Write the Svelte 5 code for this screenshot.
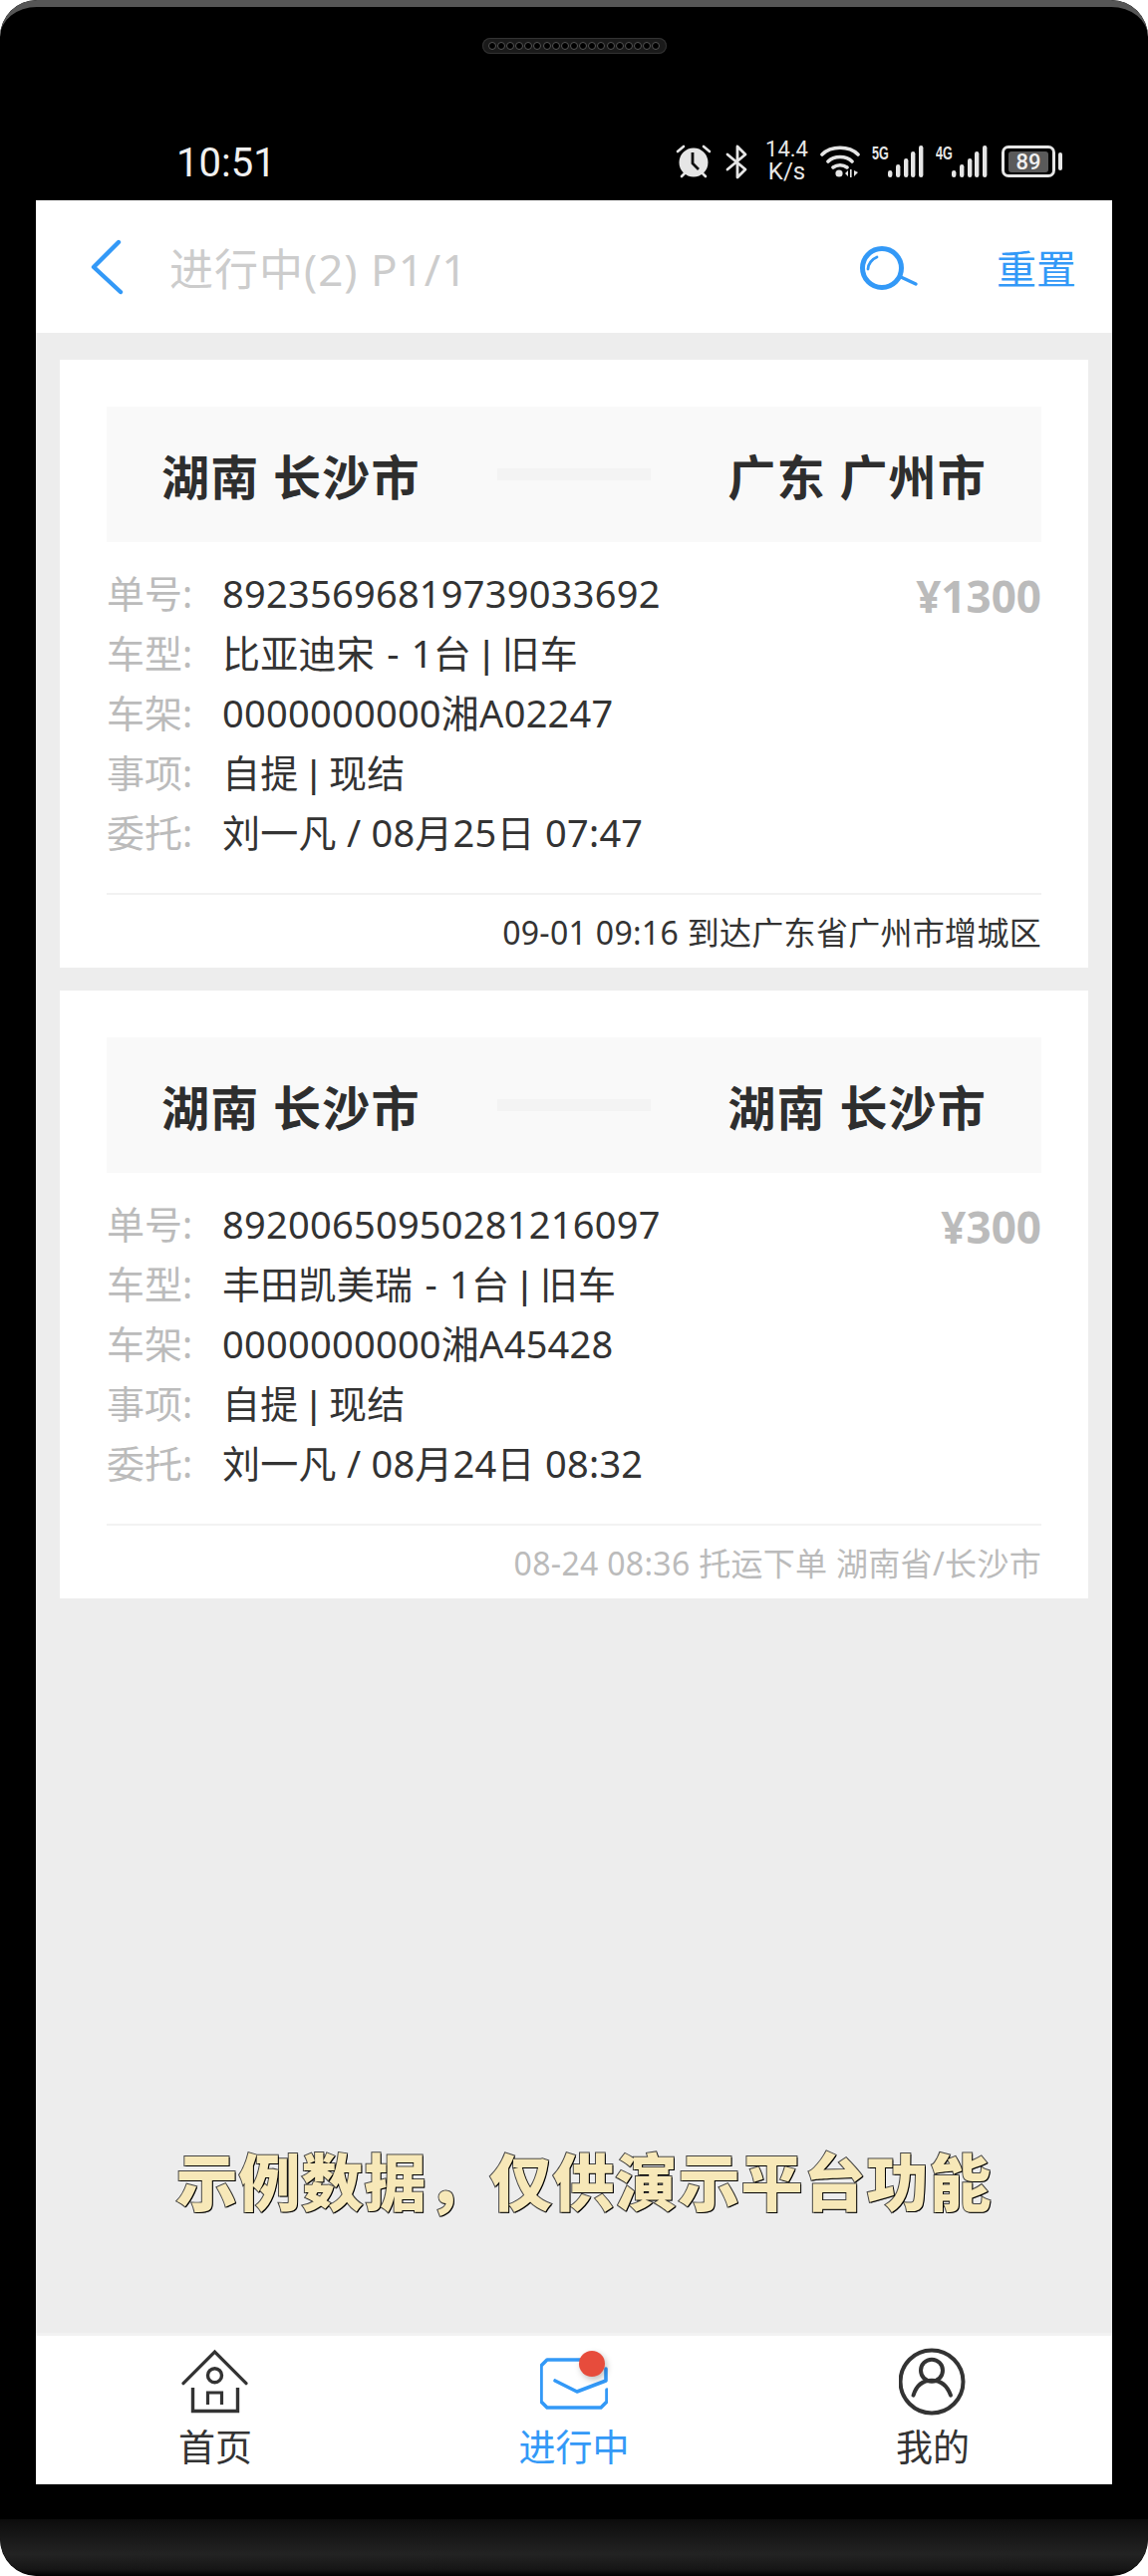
<script>
	const orders = [
		{
			from: '湖南 长沙市',
			to: '广东 广州市',
			no: '89235696819739033692',
			price: '¥1300',
			car: '比亚迪宋',
			qty: '1台',
			age: '旧车',
			vin: '0000000000湘A02247',
			client: '刘一凡 / 08月25日 07:47',
			track: '09-01 09:16 到达广东省广州市增城区',
			fresh: true
		},
		{
			from: '湖南 长沙市',
			to: '湖南 长沙市',
			no: '89200650950281216097',
			price: '¥300',
			car: '丰田凯美瑞',
			qty: '1台',
			age: '旧车',
			vin: '0000000000湘A45428',
			client: '刘一凡 / 08月24日 08:32',
			track: '08-24 08:36 托运下单 湖南省/长沙市',
			fresh: false
		}
	];
</script>

<div class="phone">
	<div class="bezel">
		<div class="speaker">
			{#each Array(19) as _}
				<i></i>
			{/each}
		</div>
		<div class="status">
			<span class="time">10:51</span>
			<div class="status-icons">
				<svg class="alarm" width="36" height="36" viewBox="0 0 36 36">
					<circle cx="18" cy="19" r="14.5" fill="#e6e6e6" />
					<path d="M17 9v11l6 6" fill="none" stroke="#111" stroke-width="2.8" />
					<path d="M2 8l6-5M34 8l-6-5M6 33l3-3M30 33l-3-3" stroke="#e6e6e6" stroke-width="2.6" stroke-linecap="round" />
				</svg>
				<svg class="bt" width="22" height="35" viewBox="0 0 22 35">
					<path d="M2 10l18 15-8 8V2l8 8L2 25" fill="none" stroke="#e6e6e6" stroke-width="2.8" stroke-linejoin="round" stroke-linecap="round" />
				</svg>
				<div class="speed"><span>14.4</span><span class="unit">K/s</span></div>
				<svg class="wifi" width="40" height="34" viewBox="0 0 40 34">
					<path d="M2 10C11 1 29 1 38 10M8 17c6-6 18-6 24 0M13 23c4-3 10-3 14 0" fill="none" stroke="#e6e6e6" stroke-width="3.6" stroke-linecap="round" />
					<circle cx="19" cy="29" r="3.6" fill="#e6e6e6" />
					<path d="M25 29l3-3v6zM34 26v6l4-4z" fill="#e6e6e6" />
					<rect x="30" y="25" width="1.6" height="8" fill="#e6e6e6" />
				</svg>
				{#each ['5G', '4G'] as net}
					<div class="net">
						<span>{net}</span>
						<svg width="36" height="32" viewBox="0 0 36 32">
							<rect x="0" y="25" width="4.4" height="7" rx="2.2" />
							<rect x="8" y="19" width="4.4" height="13" rx="2.2" />
							<rect x="16" y="13" width="4.4" height="19" rx="2.2" />
							<rect x="23" y="6" width="4.4" height="26" rx="2.2" />
							<rect x="31" y="0" width="4.4" height="32" rx="2.2" />
						</svg>
					</div>
				{/each}
				<div class="battery">
					<div class="cell"><span>89</span></div>
					<div class="nub"></div>
				</div>
			</div>
		</div>
	</div>

	<div class="screen">
		<header class="topbar">
			<svg class="back" width="36" height="60" viewBox="0 0 36 60">
				<path d="M28 5L3 30l27 25" fill="none" stroke="#3399f7" stroke-width="4.4" stroke-linecap="round" stroke-linejoin="round" />
			</svg>
			<span class="title">进行中(2) P1/1</span>
			<svg class="search" width="64" height="48" viewBox="0 0 64 48">
				<circle cx="23" cy="24" r="19.5" fill="none" stroke="#3399f7" stroke-width="5" />
				<path d="M42 33l15 7" stroke="#3399f7" stroke-width="3.4" stroke-linecap="round" />
				<path d="M9 25c0-5 4-10 9-12" fill="none" stroke="#3399f7" stroke-width="2.8" stroke-linecap="round" />
			</svg>
			<span class="reset">重置</span>
		</header>

		<main class="list">
			{#each orders as o}
				<article class="card">
					<div class="route">
						<b>{o.from}</b>
						<span class="dash"></span>
						<b>{o.to}</b>
					</div>
					<div class="rows">
						<div class="row">
							<span class="k">单号:</span><span class="v no">{o.no}</span>
							<span class="price">{o.price}</span>
						</div>
						<div class="row">
							<span class="k">车型:</span>
							<span class="v">{o.car} <i class="minus">-</i> {o.qty} <i class="pipe">|</i> {o.age}</span>
						</div>
						<div class="row"><span class="k">车架:</span><span class="v">{o.vin}</span></div>
						<div class="row">
							<span class="k">事项:</span>
							<span class="v">自提 <i class="pipe">|</i> 现结</span>
						</div>
						<div class="row"><span class="k">委托:</span><span class="v">{o.client}</span></div>
					</div>
					<div class="track" class:fresh={o.fresh}>{o.track}</div>
				</article>
			{/each}
			<div class="caption">示例数据，仅供演示平台功能</div>
		</main>

		<nav class="tabs">
			<div class="tab">
				<svg width="68" height="72" viewBox="0 0 68 72">
					<path d="M2 38.7L33.500 7 65 38.700" fill="none" stroke="#333" stroke-width="3.2" stroke-linecap="round" />
					<circle cx="33.500" cy="30.700" r="7" fill="none" stroke="#333" stroke-width="3.400" />
					<path d="M11.500 43v23.500h45V43" fill="none" stroke="#333" stroke-width="3.400" />
					<path d="M26.500 60V48h14v12" fill="none" stroke="#333" stroke-width="3.200" />
				</svg>
				<span>首页</span>
			</div>
			<div class="tab active">
				<svg width="68" height="72" viewBox="0 0 68 72">
					<path d="M52 15H7l-6 6v36l6 6h54l6-6V45" fill="none" stroke="#3399f7" stroke-width="3.600" stroke-linecap="round" stroke-linejoin="round" />
					<path d="M15 36l22 11 29-11v-12" fill="none" stroke="#3399f7" stroke-width="3.600" stroke-linecap="round" stroke-linejoin="round" />
				</svg>
				<i class="badge"></i>
				<span>进行中</span>
			</div>
			<div class="tab">
				<svg width="68" height="72" viewBox="0 0 68 72">
					<circle cx="33" cy="37" r="31.500" fill="none" stroke="#333" stroke-width="4" />
					<circle cx="33" cy="25.700" r="11" fill="none" stroke="#333" stroke-width="4" />
					<path d="M14.500 50.700c3-10 10-15 18.500-15s15.500 5 19 15" fill="none" stroke="#333" stroke-width="4" stroke-linecap="round" />
				</svg>
				<span>我的</span>
			</div>
		</nav>
	</div>

	<div class="chin"></div>
</div>

<style>
	:global(body) {
		background: #fff;
	}

	.phone {
		display: flex;
		flex-direction: column;
		width: 1152px;
		height: 2585px;
		background: #000;
		border-radius: 37px;
		overflow: hidden;
		font-family: 'Noto Sans', 'Noto Sans CJK SC', sans-serif;
	}

	.bezel {
		flex: none;
		display: flex;
		flex-direction: column;
		height: 201px;
		border-top: 7px solid #565656;
		border-radius: 37px 37px 0 0;
		box-sizing: border-box;
	}

	.speaker {
		display: flex;
		align-items: center;
		justify-content: center;
		gap: 1.170px;
		width: 185px;
		height: 16px;
		margin: 31px auto 0;
		border-radius: 8px;
		background: #1a1a1a;
		box-shadow: inset 0 0 0 1px #333;
	}

	.speaker i {
		width: 8px;
		height: 8px;
		box-sizing: border-box;
		border: 1px solid #555;
		border-radius: 50%;
		background: #000;
	}

	.status {
		display: flex;
		align-items: center;
		justify-content: space-between;
		margin-top: 84px;
		padding: 0 86px 0 177px;
		color: #e6e6e6;
	}

	.time {
		margin-top: 4px;
		font: 400 40px/44px Roboto, sans-serif;
		color: #f0f0f0;
	}

	.status-icons {
		display: flex;
		align-items: center;
		gap: 12px;
	}

	.alarm {
		margin-right: 2px;
	}

	.bt {
		margin-right: 6px;
	}

	.speed {
		display: flex;
		flex-direction: column;
		align-items: center;
		font: 400 22px/20px Roboto, sans-serif;
	}

	.speed .unit {
		font-size: 24px;
		line-height: 24px;
	}

	.net {
		display: flex;
		align-items: flex-start;
		width: 52px;
	}

	.net span {
		width: 16px;
		font: 700 18px/16px 'Liberation Sans', sans-serif;
		transform: scaleX(0.7);
		transform-origin: left;
		white-space: nowrap;
	}

	.net svg {
		fill: #e6e6e6;
	}

	.battery {
		display: flex;
		align-items: center;
		gap: 3px;
		margin-left: 2px;
	}

	.cell {
		display: flex;
		align-items: center;
		justify-content: center;
		width: 54px;
		height: 32px;
		box-sizing: border-box;
		border: 3px solid #e6e6e6;
		border-radius: 7px;
	}

	.cell span {
		display: block;
		width: 40px;
		border-radius: 3px;
		background: #5a5a5a;
		text-align: center;
		font: 500 22px/21px Roboto, sans-serif;
		color: #f0f0f0;
	}

	.nub {
		width: 4px;
		height: 18px;
		border-radius: 2px;
		background: #e6e6e6;
	}

	.screen {
		flex: none;
		display: flex;
		flex-direction: column;
		height: 2292px;
		margin: 0 36px;
		background: #ededed;
	}

	.topbar {
		flex: none;
		display: flex;
		align-items: center;
		height: 133px;
		padding: 0 36px 0 55px;
		background: #fff;
	}

	.title {
		flex: 1;
		margin-left: 43px;
		font-size: 44px;
		letter-spacing: 1px;
		color: #ccc;
	}

	.search {
		margin: 2px 74px 0 0;
	}

	.reset {
		font-size: 40px;
		color: #3399f7;
	}

	.list {
		flex: 1;
		position: relative;
		display: flex;
		flex-direction: column;
		gap: 23px;
		padding: 27px 24px;
	}

	.card {
		padding: 47px 47px 15px;
		background: #fff;
	}

	.route {
		display: flex;
		align-items: center;
		justify-content: space-between;
		height: 136px;
		padding: 0 55px;
		background: #f9f9f9;
		font-size: 48px;
		letter-spacing: 1.200px;
		color: #2e2e2e;
	}

	.route b {
		font-weight: 700;
	}

	.dash {
		width: 154px;
		height: 12px;
		background: #f3f3f3;
	}

	.rows {
		margin-top: 19px;
		padding-bottom: 33px;
		border-bottom: 2px solid #f2f2f2;
	}

	.row {
		display: flex;
		align-items: center;
		height: 60px;
		font-size: 38px;
		color: #333;
	}

	.k {
		width: 116px;
		color: #bbb;
	}

	.v {
		flex: 1;
		letter-spacing: 0.250px;
	}

	.v.no {
		padding-top: 4px;
	}

	.pipe {
		font-family: 'Liberation Sans', sans-serif;
		font-style: normal;
	}

	.minus {
		padding: 0 2px;
		font-style: normal;
	}

	.price {
		margin-top: 10px;
		font-size: 44px;
		font-weight: 700;
		color: #bbb;
	}

	.track {
		padding-top: 18px;
		text-align: right;
		font-size: 32px;
		line-height: 40px;
		letter-spacing: 0.300px;
		color: #bbb;
	}

	.track.fresh {
		color: #333;
	}

	.caption {
		position: absolute;
		left: 20px;
		right: 0;
		top: 1823px;
		text-align: center;
		font-size: 62px;
		line-height: 66px;
		font-weight: 900;
		letter-spacing: 1px;
		color: #f7e8b8;
		-webkit-text-stroke: 2px #444;
		paint-order: stroke fill;
		text-shadow: 1px 1px 0 #000;
	}

	.tabs {
		flex: none;
		display: grid;
		grid-template-columns: repeat(3, 1fr);
		height: 152px;
		border-top: 3px solid #f2f2f2;
		box-sizing: border-box;
		background: #fff;
	}

	.tab {
		position: relative;
		display: flex;
		flex-direction: column;
		align-items: center;
		padding-top: 9px;
		font-size: 37px;
		line-height: 44px;
		color: #333;
	}

	.tab span {
		margin-top: 9px;
	}

	.tab.active {
		color: #3399f7;
	}

	.badge {
		position: absolute;
		left: 185px;
		top: 15px;
		width: 26px;
		height: 26px;
		border-radius: 50%;
		background: #e74c3c;
		box-shadow: 2px 3px 6px rgba(0, 0, 0, 0.25);
	}

	.chin {
		flex: 1;
		margin-top: 35px;
		background: linear-gradient(#0c0c0c, #232323 62%, #161616 88%, #000);
		border-radius: 0 0 38px 38px;
	}
</style>
